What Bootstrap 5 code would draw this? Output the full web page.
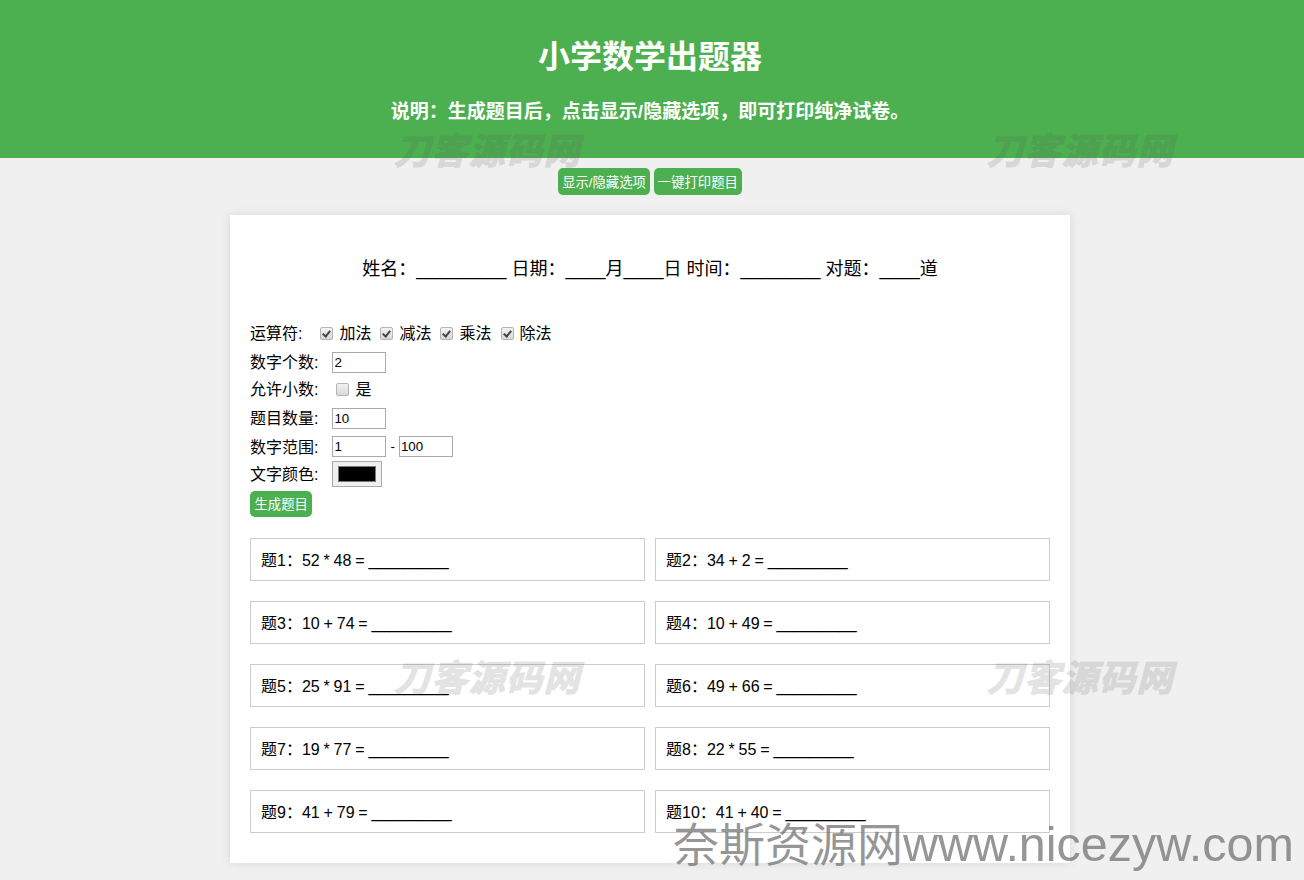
<!DOCTYPE html>
<html lang="zh-CN">
<head>
<meta charset="utf-8">
<title>小学数学出题器</title>
<link href="https://cdn.jsdelivr.net/npm/bootstrap@5.3.0/dist/css/bootstrap.min.css" rel="stylesheet">
<style>
body{background:#f0f0f0;color:#000;font-family:"Liberation Sans","Noto Sans CJK SC",sans-serif;font-size:16px;line-height:normal;position:relative}
.top-banner{background:#4caf50;color:#fff;height:158px;padding:39px 4px 0 0}
.top-banner h1{font-size:32px;font-weight:700;line-height:37px;margin:0 0 25px}
.top-banner h3{font-size:19px;font-weight:700;line-height:22px;margin:0}
.act-row{gap:4px;margin-top:10px;padding-right:4px}
.act-btn{background:#4caf50;border:0;border-radius:5px;color:#fff;font-size:13.33px;line-height:15px;padding:7px 4px 5px}
.act-btn:hover{background:#4caf50;color:#fff}
.paper{width:840px;background:#fff;margin:20px 0 17px 230px;padding:20px;box-shadow:0 0 10px rgba(0,0,0,.1);height:648px}
.sheet-head{font-size:18px;line-height:22px;margin:23px 0 41px}
.opt-line{align-items:center;white-space:nowrap}
.h-a{height:24px;margin-bottom:4px}
.h-b{height:26px}
.h-c{height:28px}
.h-d{height:30px}
.h-e{height:27px}
.opt-label{margin:0 14px 2px 0}
.num-in{width:54px;height:21px;border:1px solid #aaa;padding:1px;font-size:13.33px;font-family:inherit;color:#000;border-radius:0;outline:0}
.dash{margin:0 4px;font-size:13.33px}
.tick{appearance:none;width:13px;height:13px;margin:0 6px 0 4px;border:1px solid #b4b4b4;border-radius:2px;background:linear-gradient(#f2f2f2,#d8d8d8);position:relative;flex:none}
.tick:checked::after{content:"";position:absolute;left:3px;top:1px;width:5px;height:8px;border:solid #444;border-width:0 2px 2px 0;transform:rotate(40deg)}
.tick-text{margin:0 5px 2px 0}
.swatch{width:50px;height:26px;border:1px solid #aaa;background:#efefef;padding:4px 5px;display:flex}
.swatch i{display:block;flex:1;background:#000;border:1px solid #777}
.gen-btn{padding:6px 4.5px 5px;margin-top:3px}
.quiz-grid{grid-template-columns:395px 395px;column-gap:10px;row-gap:20px;margin-top:21px}
.quiz-item{height:43px;border:1px solid #ccc;padding:0 10px;line-height:43px;word-spacing:-.6px;white-space:nowrap}
.wm{position:absolute;font-weight:700;font-style:italic;font-size:36px;letter-spacing:1.4px;line-height:36px;color:#5a5a5a;-webkit-text-stroke:1.2px #5a5a5a;opacity:.16;white-space:nowrap;pointer-events:none}
.wm-a{left:394px;top:134px}.wm-b{left:987px;top:134px}.wm-c{left:394px;top:661px}.wm-d{left:987px;top:661px}
.wm-site{position:absolute;left:673px;top:816px;font-size:46px;line-height:56px;color:rgba(110,110,110,.72);white-space:nowrap;pointer-events:none}
.wm-site span{font-size:48.5px}
</style>
</head>
<body>
<header class="top-banner text-center">
  <h1>小学数学出题器</h1>
  <h3>说明：生成题目后，点击显示/隐藏选项，即可打印纯净试卷。</h3>
</header>
<div class="d-flex justify-content-center act-row">
  <button class="btn act-btn" type="button">显示/隐藏选项</button>
  <button class="btn act-btn" type="button">一键打印题目</button>
</div>
<main class="paper">
  <div class="sheet-head text-center">姓名：_________ 日期：____月____日 时间：________ 对题：____道</div>
  <div class="d-flex opt-line h-a"><span class="opt-label">运算符:</span>
    <input class="tick" type="checkbox" checked><span class="tick-text">加法</span>
    <input class="tick" type="checkbox" checked><span class="tick-text">减法</span>
    <input class="tick" type="checkbox" checked><span class="tick-text">乘法</span>
    <input class="tick" type="checkbox" checked><span class="tick-text">除法</span>
  </div>
  <div class="d-flex opt-line h-b"><span class="opt-label">数字个数:</span><input class="num-in" value="2"></div>
  <div class="d-flex opt-line h-c"><span class="opt-label">允许小数:</span><input class="tick" type="checkbox"><span class="tick-text">是</span></div>
  <div class="d-flex opt-line h-d"><span class="opt-label">题目数量:</span><input class="num-in" value="10"></div>
  <div class="d-flex opt-line h-e"><span class="opt-label">数字范围:</span><input class="num-in" value="1"><span class="dash">-</span><input class="num-in" value="100"></div>
  <div class="d-flex opt-line h-c"><span class="opt-label">文字颜色:</span><span class="swatch"><i></i></span></div>
  <button class="btn act-btn gen-btn" type="button">生成题目</button>
  <div class="d-grid quiz-grid">
    <div class="quiz-item">题1：52 * 48 = _________</div>
    <div class="quiz-item">题2：34 + 2 = _________</div>
    <div class="quiz-item">题3：10 + 74 = _________</div>
    <div class="quiz-item">题4：10 + 49 = _________</div>
    <div class="quiz-item">题5：25 * 91 = _________</div>
    <div class="quiz-item">题6：49 + 66 = _________</div>
    <div class="quiz-item">题7：19 * 77 = _________</div>
    <div class="quiz-item">题8：22 * 55 = _________</div>
    <div class="quiz-item">题9：41 + 79 = _________</div>
    <div class="quiz-item">题10：41 + 40 = _________</div>
  </div>
</main>
<div class="wm wm-a">刀客源码网</div>
<div class="wm wm-b">刀客源码网</div>
<div class="wm wm-c">刀客源码网</div>
<div class="wm wm-d">刀客源码网</div>
<div class="wm-site">奈斯资源网<span>www.nicezyw.com</span></div>
<script src="https://cdn.jsdelivr.net/npm/bootstrap@5.3.0/dist/js/bootstrap.bundle.min.js"></script>
</body>
</html>
